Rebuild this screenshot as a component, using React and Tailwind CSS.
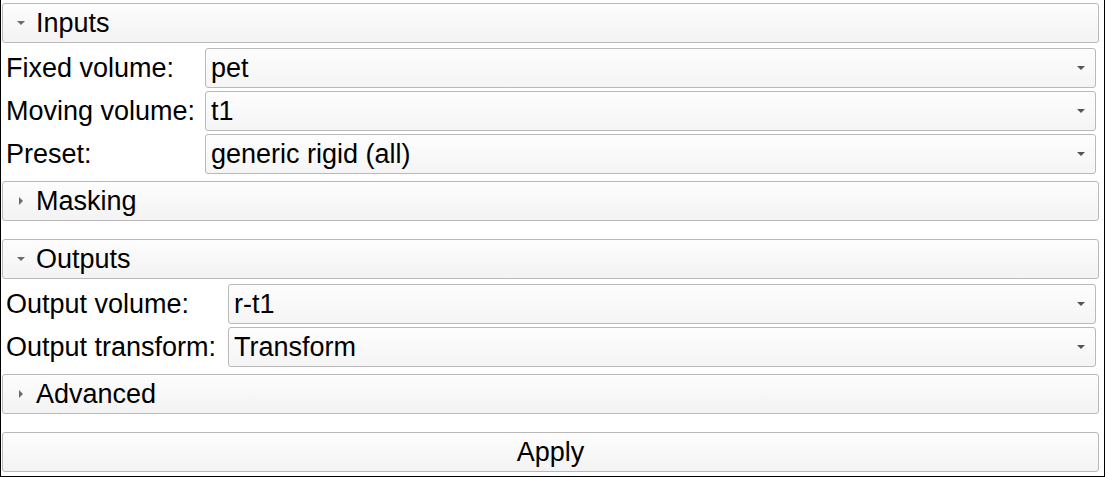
import React from 'react';

const font = { fontFamily: '"Liberation Sans", Arial, sans-serif' };

const Caret = ({ open }) => (
    <svg className="w-[8px] h-[8px] shrink-0" viewBox="0 0 8 8">
        {open
            ? <polygon points="0,2 8,2 4,6" fill="#6b6b6b" />
            : <polygon points="2,0 6,4 2,8" fill="#6b6b6b" />}
    </svg>
);

const Section = ({ title, open, className = '' }) => (
    <div className={`flex items-center h-[40px] w-[1097px] ml-[1px] pl-[14px] gap-[11px] border border-[#b9b9b9] rounded-[3px] bg-gradient-to-b from-[#fdfdfd] to-[#f3f3f3] text-[27px] leading-none text-black ${className}`}>
        <Caret open={open} />
        <span className="pt-[1px]">{title}</span>
    </div>
);

const Select = ({ value }) => (
    <div className="flex-1 flex items-center justify-between h-[40px] pl-[5px] pr-[10px] border border-[#b9b9b9] rounded-[3px] bg-gradient-to-b from-[#fdfdfd] to-[#f5f5f5] text-[27px] leading-none text-black">
        <span className="pt-[1px]">{value}</span>
        <svg className="w-[8px] h-[4px]" viewBox="0 0 8 4">
            <polygon points="0,0 8,0 4,4" fill="#555555" />
        </svg>
    </div>
);

const Row = ({ label, value, labelW, className = '' }) => (
    <div className={`flex items-center h-[40px] pl-[5px] pr-[8px] ${className}`}>
        <span className={`${labelW} shrink-0 pt-[1px] text-[27px] leading-none text-black`}>{label}</span>
        <Select value={value} />
    </div>
);

export default function App() {
    return (
        <div style={font} className="w-[1105px] h-[477px] bg-white border-l border-r border-b border-black pt-[3px] overflow-hidden">
            <Section title="Inputs" open />
            <Row className="mt-[5px]" label="Fixed volume:" value="pet" labelW="w-[199px]" />
            <Row className="mt-[3px]" label="Moving volume:" value="t1" labelW="w-[199px]" />
            <Row className="mt-[3px]" label="Preset:" value="generic rigid (all)" labelW="w-[199px]" />
            <Section className="mt-[7px]" title="Masking" />
            <Section className="mt-[18px]" title="Outputs" open />
            <Row className="mt-[5px]" label="Output volume:" value="r-t1" labelW="w-[222px]" />
            <Row className="mt-[3px]" label="Output transform:" value="Transform" labelW="w-[222px]" />
            <Section className="mt-[7px]" title="Advanced" />
            <button className="mt-[18px] ml-[1px] w-[1097px] h-[40px] flex items-center justify-center pt-[1px] border border-[#b9b9b9] rounded-[3px] bg-gradient-to-b from-[#fdfdfd] to-[#f3f3f3] text-[27px] leading-none text-black">
                Apply
            </button>
        </div>
    );
}
